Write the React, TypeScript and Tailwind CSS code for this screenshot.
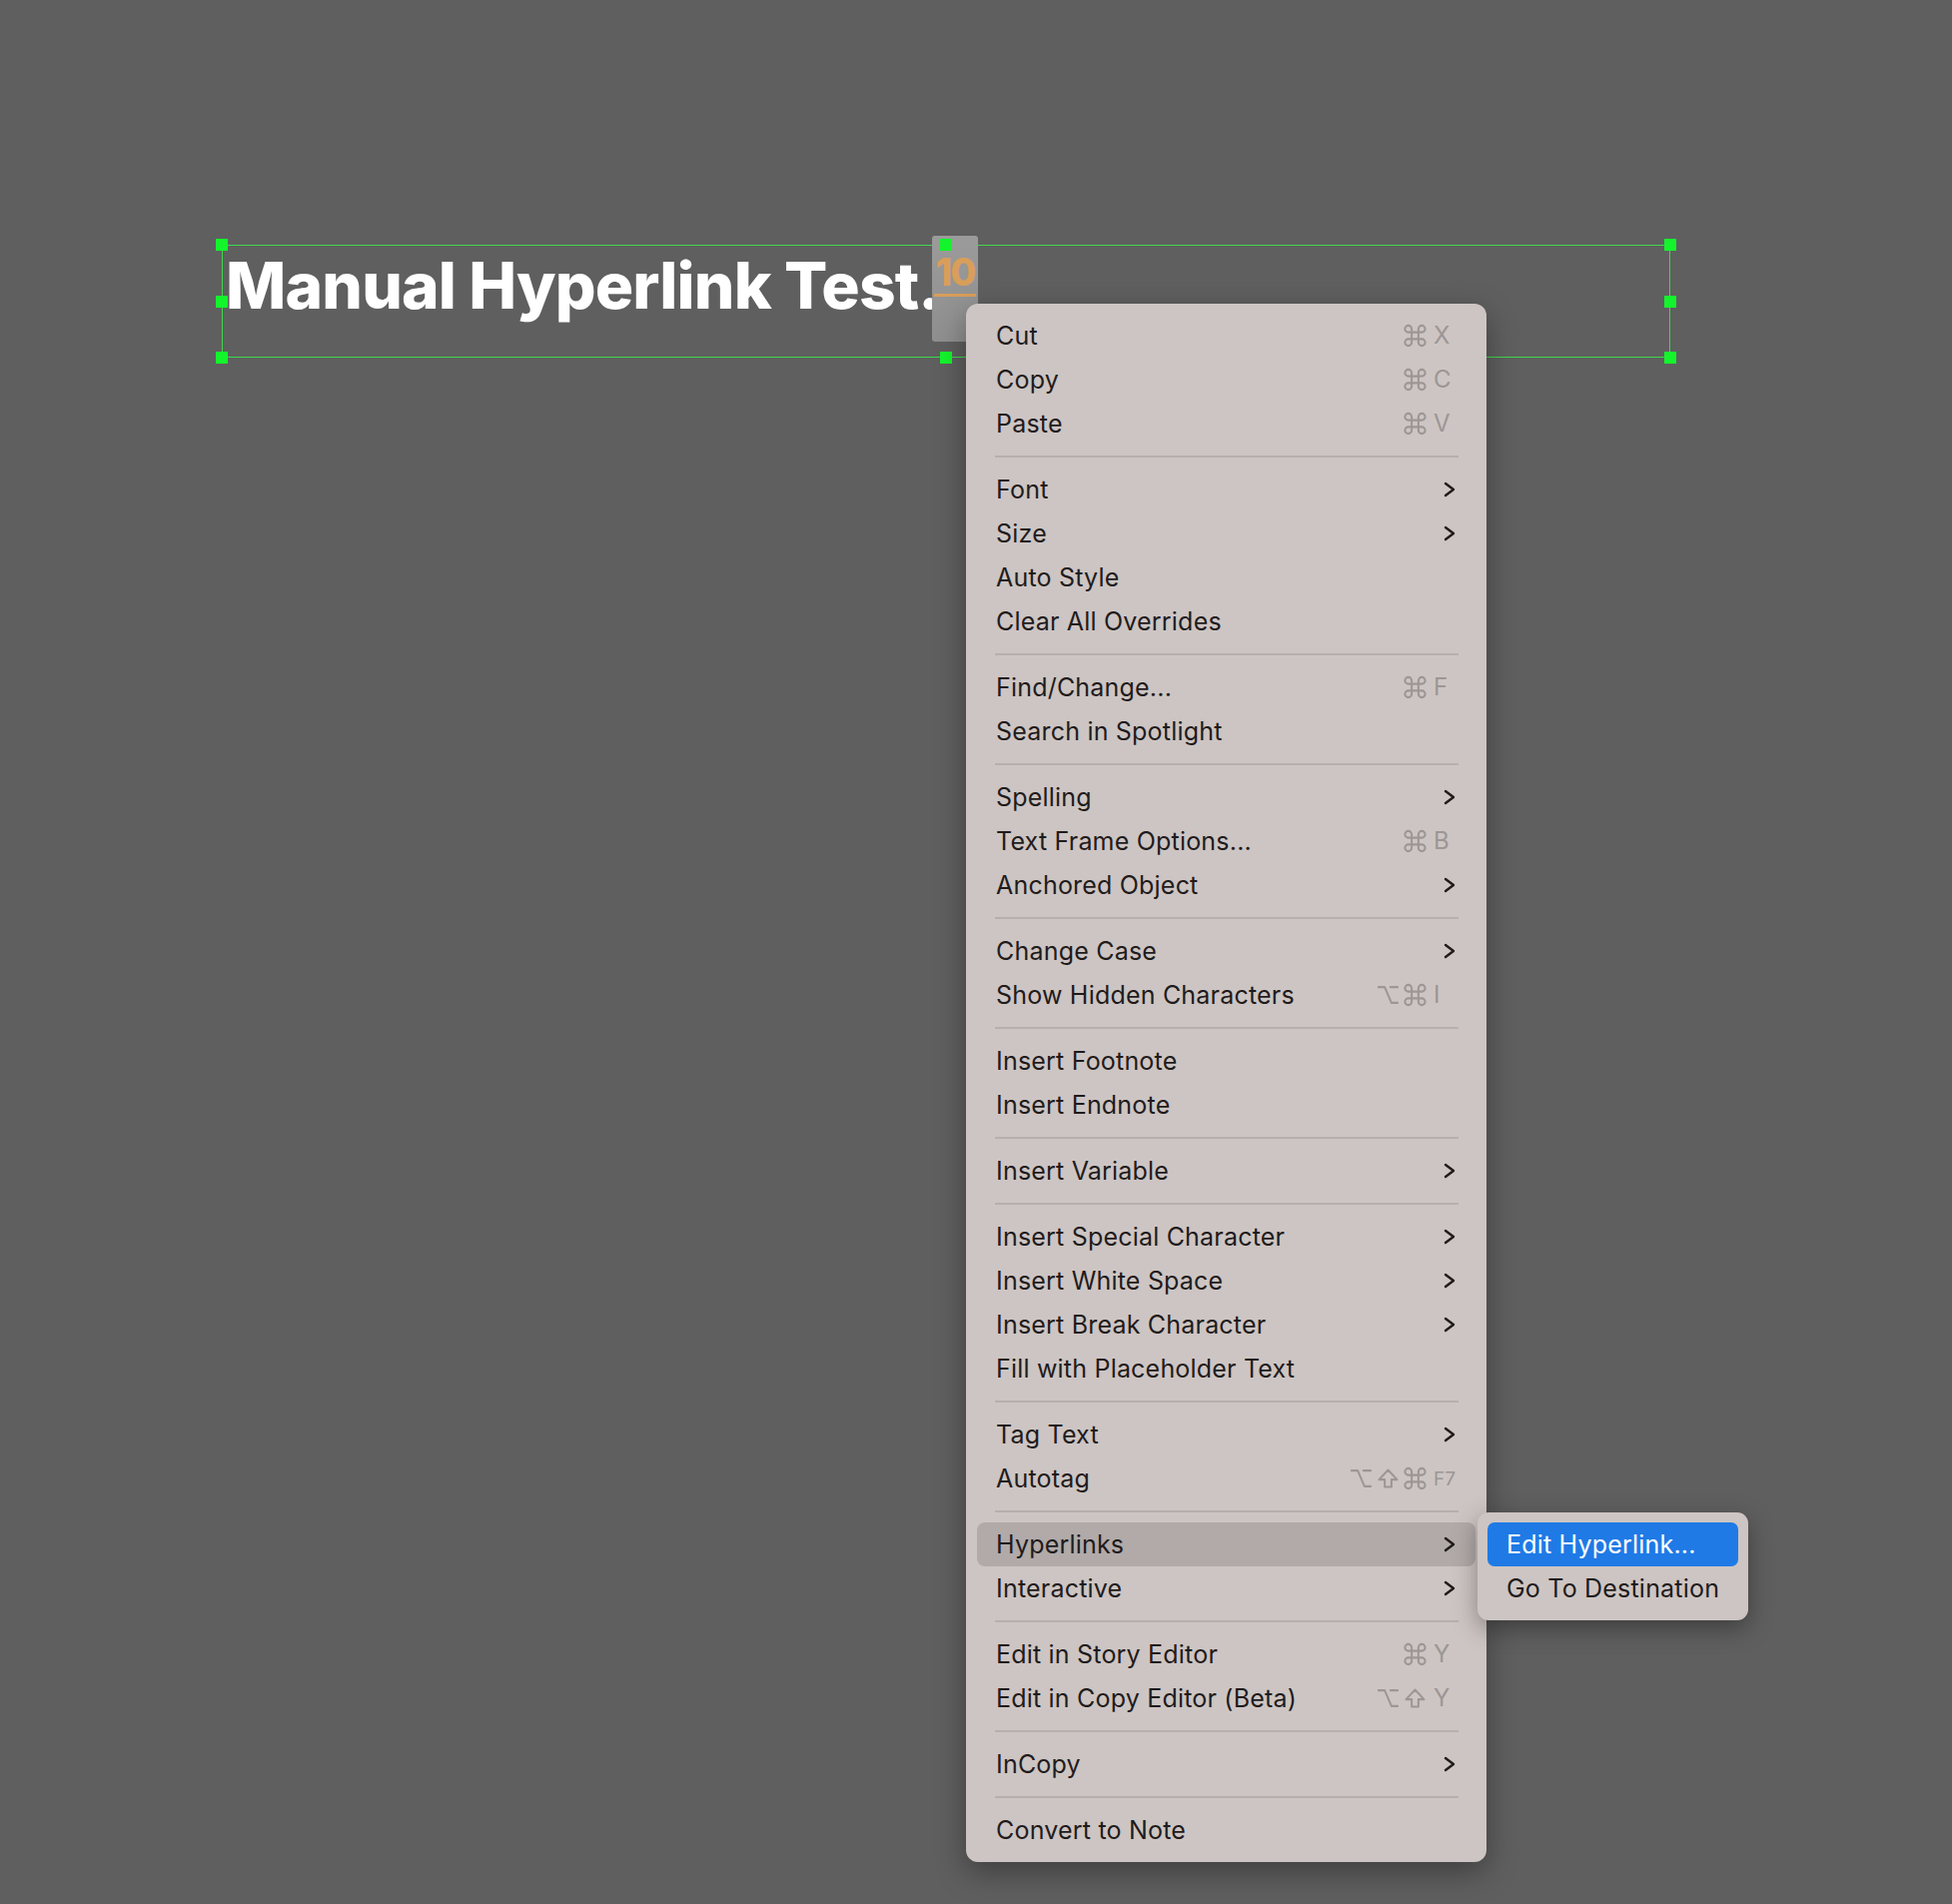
import React from 'react';

type Mod = 'opt' | 'shift' | 'cmd';

type Item = {
  label: string;
  mods?: Mod[];
  keyName?: string;
  sub?: boolean;
  active?: boolean;
};

type Entry = Item | 'sep';

const MENU: Entry[] = [
  { label: 'Cut', mods: ['cmd'], keyName: 'X' },
  { label: 'Copy', mods: ['cmd'], keyName: 'C' },
  { label: 'Paste', mods: ['cmd'], keyName: 'V' },
  'sep',
  { label: 'Font', sub: true },
  { label: 'Size', sub: true },
  { label: 'Auto Style' },
  { label: 'Clear All Overrides' },
  'sep',
  { label: 'Find/Change...', mods: ['cmd'], keyName: 'F' },
  { label: 'Search in Spotlight' },
  'sep',
  { label: 'Spelling', sub: true },
  { label: 'Text Frame Options...', mods: ['cmd'], keyName: 'B' },
  { label: 'Anchored Object', sub: true },
  'sep',
  { label: 'Change Case', sub: true },
  { label: 'Show Hidden Characters', mods: ['opt', 'cmd'], keyName: 'I' },
  'sep',
  { label: 'Insert Footnote' },
  { label: 'Insert Endnote' },
  'sep',
  { label: 'Insert Variable', sub: true },
  'sep',
  { label: 'Insert Special Character', sub: true },
  { label: 'Insert White Space', sub: true },
  { label: 'Insert Break Character', sub: true },
  { label: 'Fill with Placeholder Text' },
  'sep',
  { label: 'Tag Text', sub: true },
  { label: 'Autotag', mods: ['opt', 'shift', 'cmd'], keyName: 'F7' },
  'sep',
  { label: 'Hyperlinks', sub: true, active: true },
  { label: 'Interactive', sub: true },
  'sep',
  { label: 'Edit in Story Editor', mods: ['cmd'], keyName: 'Y' },
  { label: 'Edit in Copy Editor (Beta)', mods: ['opt', 'shift'], keyName: 'Y' },
  'sep',
  { label: 'InCopy', sub: true },
  'sep',
  { label: 'Convert to Note' },
];

const ModIcon = ({ kind }: { kind: Mod }) => (
  <span className="w-[27px] flex justify-center">
    <svg width="28" height="28" viewBox="0 0 24 24" fill="none" stroke="#9c9695" strokeWidth="1.8" strokeLinecap="round" strokeLinejoin="round">
      {kind === 'cmd' && <path d="M15 6v12a3 3 0 1 0 3-3H6a3 3 0 1 0 3 3V6a3 3 0 1 0-3 3h12a3 3 0 1 0-3-3" />}
      {kind === 'opt' && (
        <>
          <path d="M3.5 5h5.5l6 14h5.5" />
          <path d="M14 5h6.5" />
        </>
      )}
      {kind === 'shift' && <path d="M9 19.5v-6.5H4L12 4.5l8 8.5h-5v6.5H9z" />}
    </svg>
  </span>
);

const Chevron = () => (
  <svg width="12" height="16" viewBox="0 0 12 16" fill="none" stroke="#1f1b1b" strokeWidth="2.4" strokeLinecap="round" strokeLinejoin="round">
    <path d="M2 2 10 8 2 14" />
  </svg>
);

const MenuRow = ({ item }: { item: Item }) => (
  <div
    className={`h-[44px] flex items-center justify-between pl-[19px] pr-[20px] rounded-[8px] ${
      item.active ? 'bg-[#b1aaa9]' : ''
    }`}
  >
    <span className="text-[25px] tracking-[0.2px] text-[#1f1b1b] leading-none">{item.label}</span>
    {item.sub && <Chevron />}
    {item.keyName && (
      <span className="flex items-center">
        {item.mods?.map((m, i) => <ModIcon key={i} kind={m} />)}
        <span
          className={`w-[22px] ml-[5px] text-[#9c9695] leading-none ${
            item.keyName === 'F7' ? 'text-[19px]' : 'text-[24px]'
          }`}
        >
          {item.keyName}
        </span>
      </span>
    )}
  </div>
);

const Handle = ({ className }: { className: string }) => (
  <div className={`absolute w-[12px] h-[12px] bg-[#14f42c] ${className}`} />
);

export default function App() {
  return (
    <div
      className="relative w-[1954px] h-[1906px] bg-[#5f5f5f] overflow-hidden pt-[245px] pl-[222px]"
      style={{ fontFamily: 'Inter, "Noto Sans", sans-serif' }}
    >
      {/* selected text frame */}
      <div className="relative w-[1450px] h-[113px] border border-[#3fd84c] pl-[3px] pt-[8px]">
        <div className="text-white font-extrabold text-[64px] leading-none tracking-[-0.85px] whitespace-nowrap">
          Manual Hyperlink Test.
        </div>

        {/* "10" note marker, sits over the final period */}
        <div className="absolute left-[710px] top-[-10px] w-[46px] h-[106px] rounded-[3px] bg-gradient-to-b from-[#9b9b9b] to-[#8f8f8f] flex flex-col items-center pt-[20px]">
          <span className="text-[#d89e5a] font-extrabold text-[38px] leading-[32px] tracking-[-2px]">10</span>
          <span className="mt-[6px] w-[42px] h-[3px] bg-[#d89e5a]" />
        </div>

        <Handle className="left-[-7px] top-[-7px]" />
        <Handle className="left-[718px] top-[-7px]" />
        <Handle className="right-[-7px] top-[-7px]" />
        <Handle className="left-[-7px] top-[50px]" />
        <Handle className="right-[-7px] top-[50px]" />
        <Handle className="left-[-7px] bottom-[-7px]" />
        <Handle className="left-[718px] bottom-[-7px]" />
        <Handle className="right-[-7px] bottom-[-7px]" />
      </div>

      {/* context menu */}
      <div className="absolute left-[967px] top-[304px] w-[521px] rounded-[12px] bg-[#cdc5c3] px-[11px] py-[10px] shadow-[0_10px_30px_rgba(0,0,0,0.35)]">
        {MENU.map((e, i) =>
          e === 'sep' ? (
            <div key={i} className="h-[22px] flex items-center pl-[18px] pr-[17px]">
              <div className="w-full h-[2px] bg-[#b6afad]" />
            </div>
          ) : (
            <MenuRow key={i} item={e} />
          )
        )}
      </div>

      {/* hyperlinks submenu */}
      <div className="absolute left-[1479px] top-[1514px] w-[271px] rounded-[11px] bg-[#cdc5c3] p-[10px] shadow-[0_8px_24px_rgba(0,0,0,0.35)]">
        <div className="h-[44px] flex items-center pl-[19px] rounded-[7px] bg-[#1f7ae6]">
          <span className="text-[25px] tracking-[0.2px] text-white leading-none">Edit Hyperlink...</span>
        </div>
        <div className="h-[44px] flex items-center pl-[19px]">
          <span className="text-[25px] tracking-[0.2px] text-[#1f1b1b] leading-none">Go To Destination</span>
        </div>
      </div>
    </div>
  );
}
